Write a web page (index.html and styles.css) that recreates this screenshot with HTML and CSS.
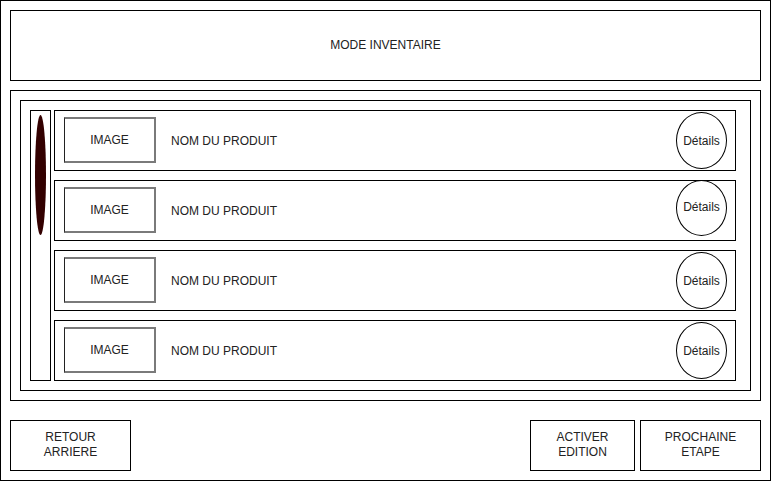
FILE: index.html
```html
<!DOCTYPE html>
<html>
<head>
	<meta charset="utf-8">
	<title>Mode inventaire</title>
	<link rel="stylesheet" href="styles.css">
</head>
<body>
	<div class="cadre">
		<header class="entete">MODE INVENTAIRE</header>

		<main class="zone-liste">
			<div class="liste">
				<div class="defilement"><div class="curseur"></div></div>
				<div class="produits">
					<div class="produit">
						<div class="image">IMAGE</div>
						<div class="nom">NOM DU PRODUIT</div>
						<div class="details">Détails</div>
					</div>
					<div class="produit">
						<div class="image">IMAGE</div>
						<div class="nom">NOM DU PRODUIT</div>
						<div class="details details-haut">Détails</div>
					</div>
					<div class="produit">
						<div class="image">IMAGE</div>
						<div class="nom">NOM DU PRODUIT</div>
						<div class="details">Détails</div>
					</div>
					<div class="produit">
						<div class="image">IMAGE</div>
						<div class="nom">NOM DU PRODUIT</div>
						<div class="details">Détails</div>
					</div>
				</div>
			</div>
		</main>

		<footer class="actions">
			<button class="bouton" id="retour">RETOUR<br>ARRIERE</button>
			<div class="espace"></div>
			<button class="bouton" id="edition">ACTIVER<br>EDITION</button>
			<button class="bouton" id="suivant">PROCHAINE<br>ETAPE</button>
		</footer>
	</div>
</body>
</html>
```

FILE: styles.css
```css
body{
	margin: 0;
	background: white;
	font-family: 'Liberation Sans', Arial, sans-serif;
	font-size: 12px;
	color: #222;
}
/*--------Cadre general-----------*/
.cadre{
	box-sizing: border-box;
	width: 771px;
	height: 481px;
	border: 1px solid black;
	padding: 9px;
	display: flex;
	flex-direction: column;
}
.entete{
	box-sizing: border-box;
	height: 71px;
	border: 1px solid black;
	display: flex;
	align-items: center;
	justify-content: center;
	padding-bottom: 2px;
}
/*--------Liste de produits-----------*/
.zone-liste{
	box-sizing: border-box;
	height: 311px;
	margin-top: 9px;
	border: 1px solid black;
	padding: 9px;
}
.liste{
	box-sizing: border-box;
	height: 291px;
	border: 1px solid black;
	padding: 9px 14px 9px 9px;
	display: flex;
	gap: 3px;
}
.defilement{
	box-sizing: border-box;
	width: 21px;
	border: 1px solid black;
	padding: 4px 0 0 4px;
}
.curseur{
	width: 11px;
	height: 120px;
	border-radius: 50%;
	background: #330000;
}
.produits{
	flex: 1;
	display: flex;
	flex-direction: column;
	gap: 9px;
}
.produit{
	box-sizing: border-box;
	height: 61px;
	border: 1px solid black;
	padding: 0 8px 0 9px;
	display: flex;
	align-items: center;
}
.image{
	box-sizing: border-box;
	width: 92px;
	height: 46px;
	margin-top: -1px;
	border: 2px solid #7a7a7a;
	border-left: 1px solid #222;
	display: flex;
	align-items: center;
	justify-content: center;
}
.nom{
	flex: 1;
	margin-left: 15px;
}
.details{
	box-sizing: border-box;
	width: 51px;
	height: 57px;
	border: 1px solid black;
	border-radius: 50%;
	display: flex;
	align-items: center;
	justify-content: center;
}
.details-haut{
	height: 56px;
	margin-top: -5px;
	padding-bottom: 3px;
}
/*--------Boutons-----------*/
.actions{
	display: flex;
	margin-top: 19px;
	gap: 5px;
}
.espace{
	flex: 1;
}
.bouton{
	box-sizing: border-box;
	height: 51px;
	border: 1px solid black;
	background: white;
	font-family: inherit;
	font-size: 12px;
	line-height: 15px;
	color: #222;
	padding: 0 0 2px 0;
}
#retour{
	width: 121px;
}
#edition{
	width: 105px;
}
#suivant{
	width: 121px;
}
```
